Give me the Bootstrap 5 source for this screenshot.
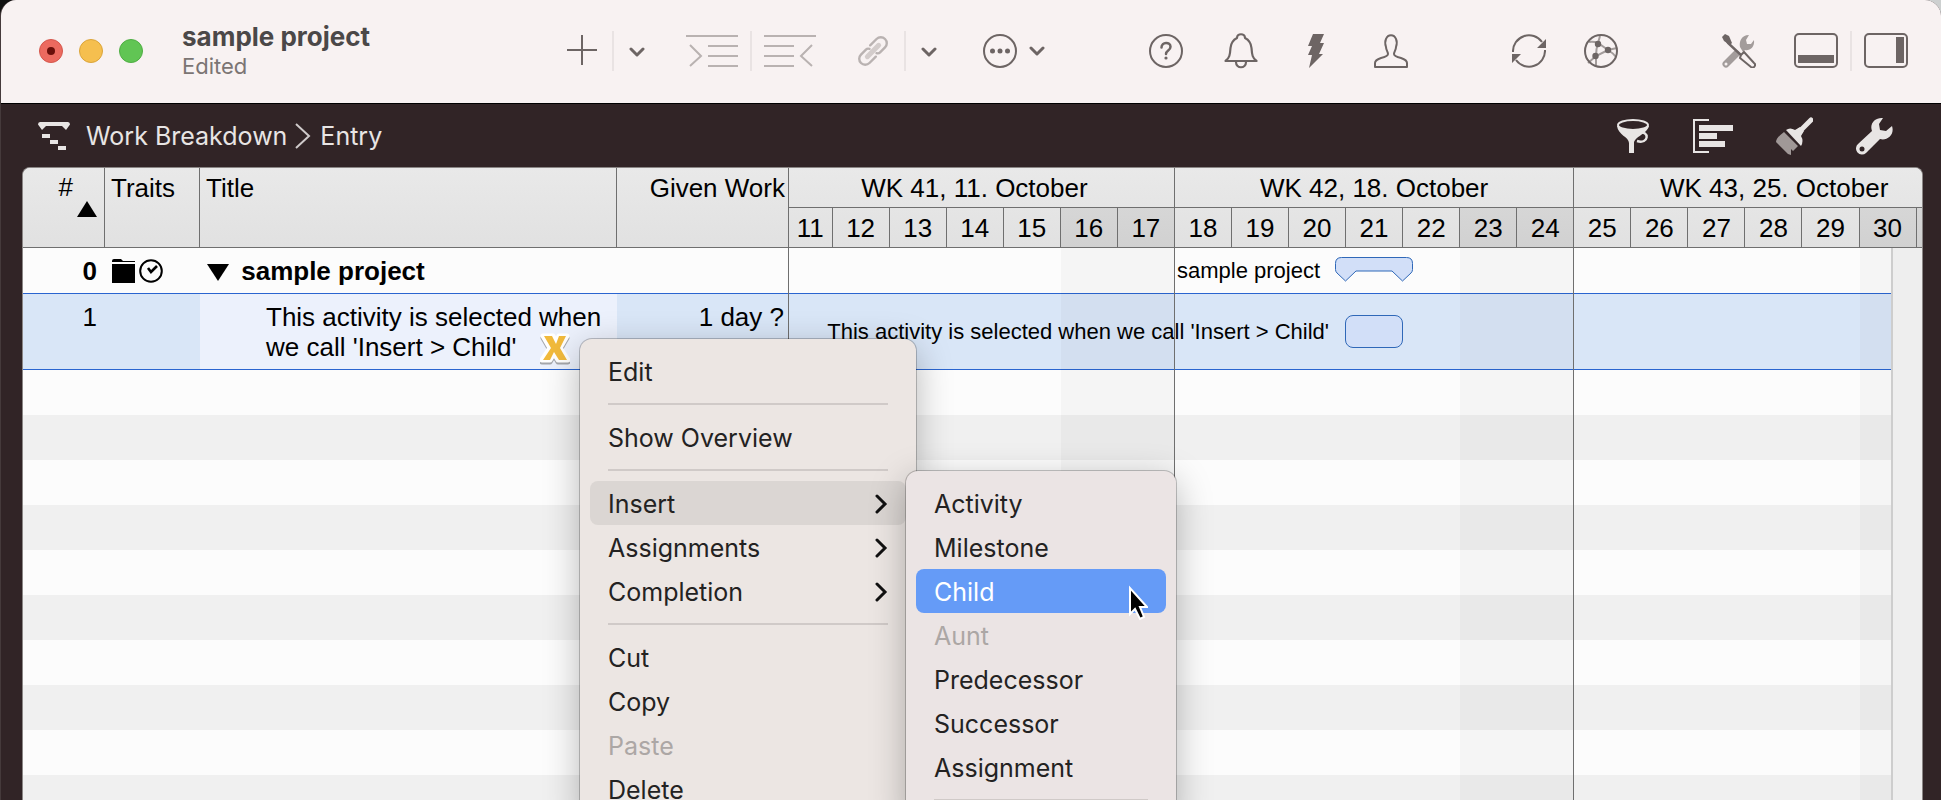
<!DOCTYPE html>
<html lang="en">
<head>
<meta charset="utf-8">
<meta name="viewport" content="width=device-width, initial-scale=1">
<title>sample project</title>
<link href="https://cdn.jsdelivr.net/npm/bootstrap@5.3.0/dist/css/bootstrap.min.css" rel="stylesheet">
<script src="https://cdn.jsdelivr.net/npm/bootstrap@5.3.0/dist/js/bootstrap.bundle.min.js"></script>
<style>
  :root { --ink: #6d6564; --rule: #6f6f6f; --sel: #d9e6f7; --sel-line: #2a65d0; --row: 45px; --head: 40px; }
  body { background: linear-gradient(90deg, #111 50%, #cdd0d0 50%); font-family: Inter, sans-serif; font-size: 26px; line-height: 30px; color: #000; }
  .app-window { background: #312426; border-radius: 16px 16px 0 0; border-left: 1px solid #453a3b; }
  .titlebar { height: 104px; background: #f8f2f2; border-bottom: 1px solid #000; padding: 0 33px 2px 38px; color: var(--ink); }
  .tool { border: 0; padding: 0; background: none; color: inherit; display: flex; justify-content: center; align-items: center; flex: none; }
  .tool:disabled { color: #b9b2b1; }
  .tool svg { display: block; }
  .light { width: 24px; height: 24px; border-radius: 50%; border: 1px solid; }
  .light-red { background: #ec6a5f; border-color: #d5574d; }
  .light-amber { background: #f5bf4f; border-color: #dba53a; }
  .light-green { background: #61c554; border-color: #4fae43; }
  .doc-name { width: 385px; margin-left: 39px; }
  .doc-name h1 { font-size: 26px; line-height: 30px; font-weight: 700; color: #4b4848; }
  .doc-name p { font-size: 22px; line-height: 28px; color: #7b7574; }
  .split { width: 2px; height: 40px; background: #e9e3e3; flex: none; }
  .gap-a { gap: 15px; } .gap-b { gap: 12px; } .gap-c { gap: 38px; } .gap-d { gap: 41px; }
  .next-set { margin-left: 41px; }
  .more-set { margin-left: 46px; }
  .pathbar { height: 63px; padding: 0 48px 0 37px; color: #e8e5e4; font-size: 25px; }
  .pathbar .tool + .tool { margin-left: 2px; }
  .pathbar a { color: inherit; text-decoration: none; }
  .sheet { margin: 0 18px 0 21px; border: 1px solid #8a8685; border-bottom: 0; border-radius: 8px 8px 0 0; background: #fcfcfc; font-family: "Liberation Sans", Arial, sans-serif; }
  .sheet-body { border-radius: 7px 7px 0 0; overflow: hidden; }
  .outline-side { width: 766px; border-right: 1px solid var(--rule); }
  .outline-table { table-layout: fixed; width: 100%; border-collapse: separate; border-spacing: 0; }
  .outline-table th { height: 80px; padding: 5px 3px 0 6px; vertical-align: top; font-weight: 400; border-right: 1px solid var(--rule); border-bottom: 1px solid var(--rule); background: linear-gradient(#e9e9e9, #e1e1e1); }
  .outline-table th:last-child { border-right: 0; }
  .outline-table .sort-head { line-height: 28px; }
  .outline-table td { padding: 0 4px 0 7px; height: var(--row); vertical-align: middle; }
  .outline-table .picked td { height: 77px; vertical-align: top; padding-top: 8px; background: var(--sel); border: solid var(--sel-line); border-width: 1px 0; }
  .outline-table .picked td.editing { background: #ecf1fc; padding-left: 66px; }
  .outline-table .disclosure { margin-right: 5px; }
  .stripes { background: repeating-linear-gradient(#fcfcfc 0 45px, #f0f0f0 45px 90px); }
  .days { display: grid; grid-template-columns: 436fr repeat(19, 571fr) 54fr; }
  .week-head, .day-head { height: var(--head); text-align: center; border-bottom: 1px solid var(--rule); border-right: 1px solid var(--rule); white-space: nowrap; overflow: hidden; }
  .week-head { background: linear-gradient(#e9e9e9, #e5e5e5); padding-top: 5px; grid-column: span 7; }
  .week-head:first-child { padding-right: 14px; }
  .day-head { background: linear-gradient(#e5e5e5, #e1e1e1); padding-top: 5px; }
  .day-head.off { background: linear-gradient(#d6d6d6, #d1d1d1); }
  .day-head:last-child, .week-head:nth-child(3) { border-right: 0; }
  .week-head.run-on { padding-left: 52px; }
  .shade { inset: 0; pointer-events: none; }
  .shade .off { background: rgba(0, 0, 0, .028); }
  .shade .week-end { border-right: 1px solid var(--rule); }
  .chart-row { height: var(--row); font-size: 22px; align-items: center; white-space: nowrap; }
  .chart-row.picked { height: 77px; background: var(--sel); border: solid var(--sel-line); border-width: 1px 0; }
  .chart-label { grid-column: 1 / 11; grid-row: 1; text-align: right; padding-right: 26px; }
  .picked .chart-label { padding-right: 17px; }
  .summary-bar { grid-column: 11; grid-row: 1; margin: 0 -10px 2px -11px; }
  .task-bar { grid-column: 11; grid-row: 1; height: 33px; margin-left: -1px; background: #d2dff8; border: 1px solid #2f68b8; border-radius: 8px; }
  .scroll-track { top: 80px; right: 0; bottom: 0; width: 31px; background: #eee; border-left: 2px solid #cdcdcd; }
  .menu-box { display: block; z-index: 5; margin: 0; padding: 10px; background: #ece6e3; border: 0; border-radius: 12px; box-shadow: 0 0 0 1px rgba(0,0,0,.22), 0 10px 36px rgba(0,0,0,.28); font: 25px/30px Inter, sans-serif; }
  .context-menu { top: 171px; left: 557px; width: 336px; }
  .sub-menu { top: -10px; left: 316px; width: 270px; background: #ebe4e4; }
  .menu-box .dropdown-item { height: 44px; padding: 8px 18px 6px; border-radius: 8px; color: #232222; display: flex; align-items: center; justify-content: space-between; }
  .menu-box .dropdown-item.opened { background: #dbd6d3; }
  .menu-box .dropdown-item.active { background: #659bf7; color: #fff; }
  .menu-box .dropdown-item:disabled { color: #aca7a5; }
  .menu-box .dropdown-divider { margin: 10px 18px; border-top: 2px solid #d0cac8; opacity: 1; }
  .pointer { right: 18px; top: 16px; z-index: 6; }
</style>
</head>
<body class="vh-100 overflow-hidden">
<div class="app-window vh-100 d-flex flex-column overflow-hidden">
  <header class="titlebar d-flex align-items-center flex-shrink-0">
    <div class="d-flex gap-3">
      <button class="tool light light-red" aria-label="Close"><svg width="8" height="8"><circle cx="4" cy="4" r="4" fill="#6a0f0a"/></svg></button>
      <button class="tool light light-amber" aria-label="Minimise"></button>
      <button class="tool light light-green" aria-label="Zoom"></button>
    </div>
    <div class="doc-name flex-shrink-0"><h1 class="m-0">sample project</h1><p class="m-0">Edited</p></div>

    <div class="d-flex align-items-center gap-a">
      <button class="tool" aria-label="Add"><svg width="30" height="32" stroke="currentColor" stroke-width="2"><path d="M0 15h30M15 0v30"/></svg></button>
      <span class="split"></span>
      <button class="tool" aria-label="Add options"><svg width="16" height="12" fill="none" stroke="currentColor" stroke-width="3" stroke-linecap="round" stroke-linejoin="round"><path d="M2 4l6 6 6-6"/></svg></button>
    </div>
    <div class="d-flex align-items-center gap-b next-set">
      <button class="tool" disabled aria-label="Indent"><svg width="52" height="34" fill="none" stroke="currentColor" stroke-width="2"><path d="M0 2h52M22 12h30M22 22h30M22 32h30M4 11l11 11L4 32"/></svg></button>
      <span class="split"></span>
      <button class="tool" disabled aria-label="Outdent"><svg width="52" height="34" fill="none" stroke="currentColor" stroke-width="2"><path d="M0 2h52M0 12h30M0 22h30M0 32h30M48 11L37 22l11 10"/></svg></button>
    </div>
    <div class="d-flex align-items-center gap-a next-set">
      <button class="tool" disabled aria-label="Link"><svg width="32" height="34" viewBox="0 0 32 34" fill="none" stroke-linecap="round"><g transform="rotate(45 16 17)" stroke="currentColor" stroke-width="2.4"><path d="M10 15V6a6 6 0 0 1 12 0v7q0 2-2 3M22 19v9a6 6 0 0 1-12 0v-7q0-2 2-3"/><path d="M16 9v16" stroke="#d3cccb" stroke-width="5"/></g></svg></button>
      <span class="split"></span>
      <button class="tool" aria-label="Link options"><svg width="16" height="12" fill="none" stroke="currentColor" stroke-width="3" stroke-linecap="round" stroke-linejoin="round"><path d="M2 4l6 6 6-6"/></svg></button>
    </div>
    <button class="tool gap-b more-set" aria-label="More"><svg width="34" height="34" fill="none" stroke="currentColor" stroke-width="2"><circle cx="17" cy="17" r="16"/><g fill="currentColor" stroke="none"><circle cx="9.500" cy="17" r="2.500"/><circle cx="17" cy="17" r="2.500"/><circle cx="24.500" cy="17" r="2.500"/></g></svg><svg width="16" height="12" fill="none" stroke="currentColor" stroke-width="3" stroke-linecap="round" stroke-linejoin="round"><path d="M2 3l6 6 6-6"/></svg></button>

    <span class="flex-grow-1"></span>
    <div class="d-flex align-items-center gap-d">
      <button class="tool" aria-label="Help"><svg width="34" height="34" fill="none" stroke="currentColor" stroke-width="2"><circle cx="17" cy="17" r="16"/><path d="M12.500 13.500c0-6 9-6 9-.8 0 4-4.500 3.500-4.500 7.300" stroke-width="2.500" stroke-linecap="round"/><circle cx="17" cy="24" r="1.600" fill="currentColor" stroke="none"/></svg></button>
      <button class="tool" aria-label="Notifications"><svg width="34" height="36" fill="none" stroke="currentColor" stroke-width="2.200" stroke-linejoin="round"><path d="M13 5c0-5 8-5 8 0 4 2 6 5 6.500 10 .5 7 1 10 5 13H1.500c4-3 4.500-6 5-13C7 10 9 7 13 5zM12 29c0 7 10 7 10 0"/></svg></button>
      <button class="tool" aria-label="Actions"><svg width="34" height="34" fill="currentColor"><path d="M14 0h11l-4 9h4l-5 11h4L10 34l3-13H9l4-9H9z"/></svg></button>
      <button class="tool" aria-label="Resources"><svg width="34" height="34" fill="none" stroke="currentColor" stroke-width="2" stroke-linejoin="round"><path d="M1 33v-4c0-3 3-4 6-5 4-1 7-2 7-4 0-2-2-4-2-7-1-3-1-6 0-8 2-5 8-5 10 0 1 2 1 5 0 8 0 3-2 5-2 7 0 2 3 3 7 4 3 1 6 2 6 5v4z"/></svg></button>
    </div>
    <span class="flex-grow-1"></span>
    <div class="d-flex align-items-center gap-c">
      <button class="tool" aria-label="Sync"><svg width="34" height="34" fill="none" stroke="currentColor" stroke-width="2"><path d="M1 18A16 16 0 0 1 30 8M33 16A16 16 0 0 1 4 26"/><path d="M34 5v9h-9zM0 29v-9h9z" fill="currentColor" stroke="none"/></svg></button>
      <button class="tool" aria-label="Network"><svg width="34" height="34" fill="none"><g stroke="#a39c9b" stroke-width="2"><path d="M5 8q4-1 9 1l10 7q5 3 8 7M16 2l-2 7q-2 6-2 13l0 9M33 14l-9 2-12 6-8 7"/></g><circle cx="17" cy="17" r="16" stroke="currentColor" stroke-width="2"/><g fill="currentColor"><circle cx="14" cy="10" r="3.200"/><circle cx="24" cy="16" r="3.200"/><circle cx="11.500" cy="22" r="3.200"/></g></svg></button>
    </div>
    <span class="flex-grow-1"></span>
    <div class="d-flex align-items-center gap-c">
      <button class="tool" aria-label="Tools"><svg width="34" height="34" fill="none"><path d="M4 30L14 20" stroke="#a39c9b" stroke-width="7" stroke-linecap="round"/><circle cx="4" cy="30" r="1.500" fill="#f8f2f2"/><path d="M18 13c-1-5 1-12 9-12l-3 5 1 4 4 0 3-4c1 8-5 11-9 10l-2 2z" fill="#a39c9b"/><path d="M3 4l3 5 14 13" stroke="currentColor" stroke-width="2.400"/><path d="M0 3l3-3 4 2 3 7-2 2-6-4z" fill="currentColor"/><path d="M19 21l3-3 10 11a2.500 2.500 0 0 1-3 4L18 24z" fill="#f8f2f2" stroke="currentColor" stroke-width="2"/></svg></button>
      <div class="d-flex align-items-center gap-b">
        <button class="tool" aria-label="Toggle lower panel"><svg width="44" height="36" fill="none"><rect x="1" y="1" width="42" height="33" rx="4" stroke="currentColor" stroke-width="2"/><path d="M4 22h36v8H4z" fill="currentColor"/></svg></button>
        <span class="split"></span>
        <button class="tool" aria-label="Toggle side panel"><svg width="44" height="36" fill="none"><rect x="1" y="1" width="42" height="33" rx="4" stroke="currentColor" stroke-width="2"/><path d="M32 4h8v26h-8z" fill="currentColor"/></svg></button>
      </div>
    </div>
  </header>

  <nav class="pathbar d-flex align-items-center flex-shrink-0" aria-label="View">
    <svg class="me-3" width="32" height="30" fill="currentColor"><path d="M2 1h28q2 0 2 2.500L28 9l-4-4H8L4 9 0 3.500Q0 1 2 1zM4 13h8v4H4zM12 19h8v4h-8zM20 25h8v4h-8z"/></svg>
    <a href="#work">Work Breakdown</a>
    <svg class="mx-2" width="17" height="28" fill="none" stroke="#cfcaca" stroke-width="2"><path d="M1 2l13 12L1 26"/></svg>
    <a href="#entry">Entry</a>
    <div class="d-flex align-items-center ms-auto gap-d">
      <button class="tool" aria-label="Filter"><svg width="34" height="36" fill="none"><path d="M1 8c1 9 12 11 12 17v10h5V25c0-6 13-9 15-17z" fill="currentColor"/><ellipse cx="17" cy="7" rx="15" ry="5" fill="#312426" stroke="currentColor" stroke-width="2"/><path d="M23 15c11-3 10 12-2 8" stroke="currentColor" stroke-width="2.400"/></svg></button>
      <button class="tool" aria-label="Grouping"><svg width="40" height="36" fill="none"><path d="M16 2H1v32h15" stroke="currentColor" stroke-width="2"/><path d="M6 7h34v6H6zM6 15h18v6H6zM6 23h26v6H6z" fill="currentColor"/></svg></button>
      <button class="tool" aria-label="Styles"><svg width="37" height="38" fill="none"><path d="M8 15l14 14-5 5-2-2 0 6-3-1L0 25q0-4 8-10z" fill="#a09897"/><path d="M35 3L23 15" stroke="currentColor" stroke-width="5" stroke-linecap="round"/><path d="M10 13q4-3 9 0l5-3 4 4-3 5q3 5 0 10z" fill="currentColor"/></svg></button>
      <button class="tool" aria-label="Settings"><svg width="37" height="38"><path d="M16 14C13 6 20 0 27 1l-4 6 1 6 6 1 6-5c3 9-5 15-12 13L10 36a6 6 0 0 1-8-9z" fill="currentColor"/><circle cx="6" cy="32" r="2.500" fill="#312426"/></svg></button>
    </div>
  </nav>

  <main class="sheet position-relative flex-grow-1">
    <div class="sheet-body d-flex h-100">
      <section class="outline-side d-flex flex-column flex-shrink-0">
        <table class="outline-table">
          <colgroup><col style="width:82px"><col style="width:95px"><col style="width:417px"><col></colgroup>
          <thead>
            <tr>
              <th scope="col" class="sort-head"><div class="text-end pe-4 me-1">#</div><svg class="d-block ms-auto me-1" width="20" height="16"><path d="M10 0l10 16H0z"/></svg></th>
              <th scope="col">Traits</th>
              <th scope="col">Title</th>
              <th scope="col" class="text-end">Given Work</th>
            </tr>
          </thead>
          <tbody>
            <tr class="fw-bold">
              <td class="text-end pe-2">0</td>
              <td><svg class="d-block" width="52" height="24" fill="none"><path d="M0 2q0-2 2-2h7l2 2h12v1H0zM0 5h23v19H0z" fill="#000"/><circle cx="39" cy="12" r="10.800" stroke="#000" stroke-width="2"/><path d="M36 9l3 4 6-6" stroke="#000" stroke-width="2.600"/></svg></td>
              <td><svg class="disclosure" width="22" height="17"><path d="M0 0h22L11 17z"/></svg> sample project</td>
              <td></td>
            </tr>
            <tr class="picked">
              <td class="text-end pe-2">1</td>
              <td></td>
              <td class="editing">This activity is selected when we call 'Insert &gt; Child' <svg class="ms-3" width="30" height="32" viewBox="0 0 30 32" fill="none"><path d="M3 3h10l3 6 3-6h8l-7 12 8 12H18l-4-7-4 7H2l8-12z" fill="#777" stroke="#777" stroke-width="5" stroke-linejoin="round" opacity=".6" transform="translate(0 2)"/><path d="M3 3h10l3 6 3-6h8l-7 12 8 12H18l-4-7-4 7H2l8-12z" fill="#fff" stroke="#fff" stroke-width="5" stroke-linejoin="round"/><path d="M4 3h8l4 8 3-8h7l-6 12 7 12h-8l-5-8-4 8H3l8-12z" fill="#f1ba3c"/></svg></td>
              <td class="text-end">1 day ?</td>
            </tr>
          </tbody>
        </table>
        <div class="stripes flex-grow-1"></div>
      </section>

      <section class="position-relative d-flex flex-column flex-grow-1">
        <div class="days">
          <div class="week-head">WK 41, 11. October</div><div class="week-head">WK 42, 18. October</div><div class="week-head run-on">WK 43, 25. October</div>
          <div class="day-head">11</div><div class="day-head">12</div><div class="day-head">13</div><div class="day-head">14</div><div class="day-head">15</div><div class="day-head off">16</div><div class="day-head off">17</div><div class="day-head">18</div><div class="day-head">19</div><div class="day-head">20</div><div class="day-head">21</div><div class="day-head">22</div><div class="day-head off">23</div><div class="day-head off">24</div><div class="day-head">25</div><div class="day-head">26</div><div class="day-head">27</div><div class="day-head">28</div><div class="day-head">29</div><div class="day-head off">30</div><div class="day-head off"></div>
        </div>
        <div class="position-relative d-flex flex-column flex-grow-1">
          <div class="days chart-row">
            <div class="chart-label">sample project</div>
            <svg class="summary-bar" height="25" viewBox="0 0 78 25" fill="#d2dff8" stroke="#2f68b8"><path d="M6.500.5h65q6 0 6 6v6q0 2-1.500 3.500L67.500 24 57 14H21L10.500 24 2 16Q.5 14.500.5 12.500v-6q0-6 6-6z"/></svg>
          </div>
          <div class="days chart-row picked">
            <div class="chart-label">This activity is selected when we call 'Insert &gt; Child'</div>
            <div class="task-bar"></div>
          </div>
          <div class="stripes flex-grow-1"></div>
          <div class="days shade position-absolute"><i></i><i></i><i></i><i></i><i></i><i class="off"></i><i class="off week-end"></i><i></i><i></i><i></i><i></i><i></i><i class="off"></i><i class="off week-end"></i><i></i><i></i><i></i><i></i><i></i><i class="off"></i><i class="off"></i></div>
        </div>
        <div class="scroll-track position-absolute"></div>
      </section>
    </div>

    <ul class="menu-box context-menu position-absolute list-unstyled">
      <li><button class="dropdown-item">Edit</button></li>
      <li><hr class="dropdown-divider"></li>
      <li><button class="dropdown-item">Show Overview</button></li>
      <li><hr class="dropdown-divider"></li>
      <li class="position-relative">
        <button class="dropdown-item opened" aria-expanded="true">Insert <svg width="13" height="22" fill="none" stroke="#111" stroke-width="3" stroke-linecap="round"><path d="M2 3l8 8-8 8"/></svg></button>
        <ul class="menu-box sub-menu position-absolute list-unstyled">
          <li><button class="dropdown-item">Activity</button></li>
          <li><button class="dropdown-item">Milestone</button></li>
          <li class="position-relative"><button class="dropdown-item active">Child</button>
            <svg class="pointer position-absolute" width="20" height="36" stroke="#fff" stroke-width="2"><path d="M2 3v26l5-5 5 10 4-2-4-10h7z" fill="#000"/></svg></li>
          <li><button class="dropdown-item" disabled>Aunt</button></li>
          <li><button class="dropdown-item">Predecessor</button></li>
          <li><button class="dropdown-item">Successor</button></li>
          <li><button class="dropdown-item">Assignment</button></li>
          <li><hr class="dropdown-divider"></li>
        </ul>
      </li>
      <li><button class="dropdown-item">Assignments <svg width="13" height="22" fill="none" stroke="#111" stroke-width="3" stroke-linecap="round"><path d="M2 3l8 8-8 8"/></svg></button></li>
      <li><button class="dropdown-item">Completion <svg width="13" height="22" fill="none" stroke="#111" stroke-width="3" stroke-linecap="round"><path d="M2 3l8 8-8 8"/></svg></button></li>
      <li><hr class="dropdown-divider"></li>
      <li><button class="dropdown-item">Cut</button></li>
      <li><button class="dropdown-item">Copy</button></li>
      <li><button class="dropdown-item" disabled>Paste</button></li>
      <li><button class="dropdown-item">Delete</button></li>
    </ul>
  </main>
</div>
</body>
</html>
